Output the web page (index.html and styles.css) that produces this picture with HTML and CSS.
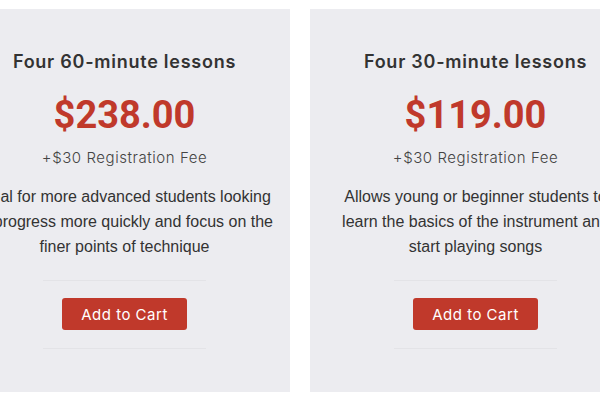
FILE: index.html
```html
<!DOCTYPE html>
<html>
<head>
<meta charset="utf-8">
<link rel="stylesheet" href="styles.css">
</head>
<body>
<div class="plans">
  <div class="card">
    <h2 class="title">Four 60-minute lessons</h2>
    <div class="price">$238.00</div>
    <div class="fee">+$30 Registration Fee</div>
    <p class="desc">Ideal for more advanced students looking to progress more quickly and focus on the finer points of technique</p>
    <div class="rule"></div>
    <button class="cart">Add to Cart</button>
    <div class="rule"></div>
  </div>
  <div class="card">
    <h2 class="title">Four 30-minute lessons</h2>
    <div class="price">$119.00</div>
    <div class="fee">+$30 Registration Fee</div>
    <p class="desc">Allows young or beginner students to learn the basics of the instrument and start playing songs</p>
    <div class="rule"></div>
    <button class="cart">Add to Cart</button>
    <div class="rule"></div>
  </div>
</div>
</body>
</html>
```
FILE: styles.css
```css
html, body {
  margin: 0;
  padding: 0;
  background: #ffffff;
  width: 600px;
  height: 400px;
  overflow: hidden;
}
.plans {
  display: flex;
  justify-content: center;
  gap: 20px;
  padding-top: 9px;
  width: 600px;
}
.card {
  flex: 0 0 331px;
  height: 383px;
  box-sizing: border-box;
  background: #ececf0;
  padding: 41px 15px 0;
  display: flex;
  flex-direction: column;
  align-items: center;
  text-align: center;
}
.title {
  margin: 0;
  font-family: Inter, "Open Sans", sans-serif;
  font-weight: 600;
  font-size: 18px;
  line-height: 24px;
  letter-spacing: 0.75px;
  color: #333333;
}
.price {
  margin-top: 19px;
  font-family: Roboto, "Liberation Sans", sans-serif;
  font-weight: 700;
  font-size: 38px;
  line-height: 44px;
  color: #c0392b;
}
.fee {
  margin-top: 11px;
  font-family: Inter, "Open Sans", sans-serif;
  font-weight: 300;
  font-size: 15px;
  line-height: 20px;
  letter-spacing: 0.55px;
  color: #444444;
}
.desc {
  margin: 16px 0 0;
  font-family: "Liberation Sans", Arial, sans-serif;
  font-size: 16px;
  line-height: 25px;
  color: #333333;
}
.rule {
  width: 163px;
  height: 1px;
  background: #e3e3e7;
  margin-top: 21px;
}
.cart {
  margin-top: 17px;
  width: 125px;
  height: 32px;
  border: none;
  border-radius: 3px;
  background: #c0392b;
  color: #ffffff;
  font-family: Inter, "Open Sans", sans-serif;
  font-size: 15px;
  font-weight: 400;
  letter-spacing: 0.5px;
  padding: 0;
}
.cart + .rule {
  margin-top: 18px;
}
```
